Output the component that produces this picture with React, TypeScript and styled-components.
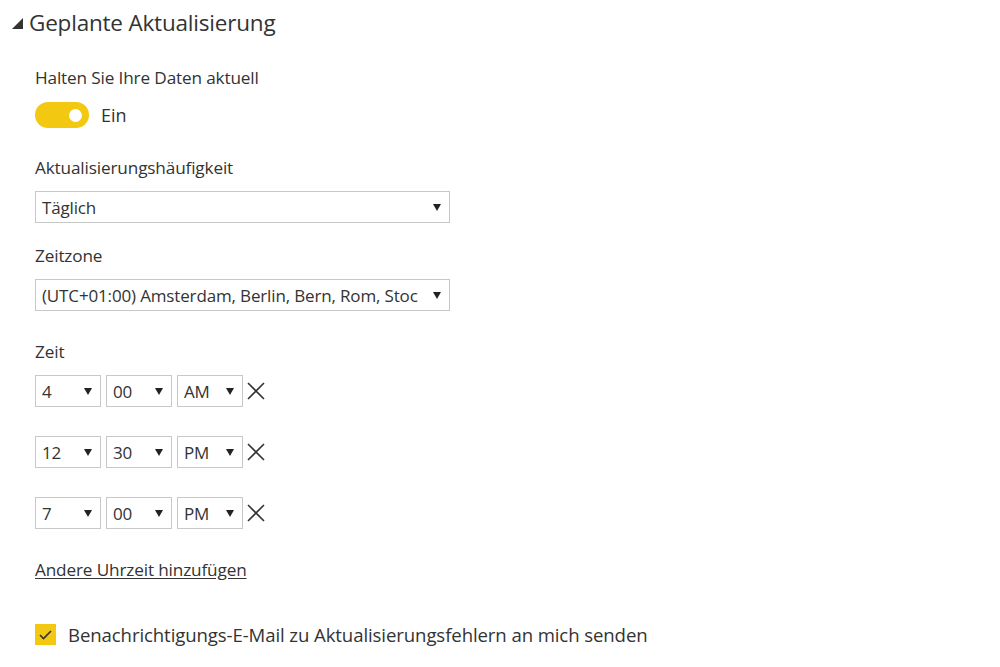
import React from "react";
import styled, { createGlobalStyle } from "styled-components";

const Global = createGlobalStyle`
  html, body { margin: 0; padding: 0; background: #ffffff; }
  body { font-family: "Open Sans", "Noto Sans", sans-serif; color: #333333; }
`;

const Page = styled.div`
  width: 1000px;
  height: 667px;
  overflow: hidden;
  box-sizing: border-box;
  padding-top: 6px;
`;

const Header = styled.div`
  display: flex;
  align-items: center;
  gap: 6px;
  padding-left: 12px;
  height: 32px;
`;

const Caret = styled.svg`
  width: 11px;
  height: 11px;
  margin-top: 2px;
`;

const Title = styled.h2`
  margin: 0;
  font-size: 22.5px;
  font-weight: 400;
  color: #333333;
  letter-spacing: -0.2px;
`;

const Body = styled.div`
  padding-left: 35px;
  display: flex;
  flex-direction: column;
`;

const Label = styled.div<{ $top: number }>`
  font-size: 17.2px;
  line-height: 22px;
  margin-top: ${(p) => p.$top}px;
  color: #333333;
  letter-spacing: -0.15px;
`;

const ToggleRow = styled.div`
  display: flex;
  align-items: center;
  gap: 12px;
  margin-top: 13px;
`;

const Toggle = styled.div`
  width: 54px;
  height: 26px;
  border-radius: 13px;
  background: #f2c811;
  display: flex;
  align-items: center;
  justify-content: flex-end;
  padding-right: 7px;
  box-sizing: border-box;
`;

const Knob = styled.div`
  width: 13px;
  height: 13px;
  border-radius: 50%;
  background: #ffffff;
`;

const ToggleText = styled.span`
  font-size: 18px;
  color: #333333;
`;

const Select = styled.div<{ $width: number; $top: number }>`
  width: ${(p) => p.$width}px;
  height: 32px;
  box-sizing: border-box;
  border: 1px solid #c8c8c8;
  display: flex;
  align-items: center;
  padding: 0 8px 0 6px;
  gap: 6px;
  margin-top: ${(p) => p.$top}px;
  background: #fff;
`;

const SelectText = styled.span`
  flex: 1;
  min-width: 0;
  white-space: nowrap;
  overflow: hidden;
  font-size: 17px;
  color: #333333;
  letter-spacing: -0.15px;
`;

const Arrow = styled.svg`
  width: 8px;
  height: 8px;
  flex: none;
`;

const TimeRow = styled.div<{ $top: number }>`
  display: flex;
  align-items: center;
  gap: 5px;
  margin-top: ${(p) => p.$top}px;
`;

const TimeSelect = styled(Select)`
  margin-top: 0;
`;

const Close = styled.svg`
  width: 20px;
  height: 20px;
  margin-left: -2px;
`;

const Link = styled.a`
  margin-top: 30px;
  font-size: 17.2px;
  line-height: 22px;
  color: #333333;
  text-decoration: underline;
  text-underline-offset: 2px;
  align-self: flex-start;
  letter-spacing: -0.15px;
`;

const CheckRow = styled.label`
  display: flex;
  align-items: center;
  gap: 12px;
  margin-top: 41px;
`;

const Box = styled.span`
  width: 21px;
  height: 21px;
  background: #f2c811;
  display: flex;
  align-items: center;
  justify-content: center;
`;

const CheckText = styled.span`
  font-size: 18.6px;
  color: #333333;
  letter-spacing: -0.1px;
`;

const ArrowIcon = () => (
  <Arrow viewBox="0 0 8 8">
    <polygon points="0,1 8,1 4,8" fill="#222" />
  </Arrow>
);

const Dropdown = ({ value, width, top }: { value: string; width: number; top: number }) => (
  <Select $width={width} $top={top}>
    <SelectText>{value}</SelectText>
    <ArrowIcon />
  </Select>
);

const times = [
  ["4", "00", "AM"],
  ["12", "30", "PM"],
  ["7", "00", "PM"],
];

export default function App() {
  return (
    <Page>
      <Global />
      <Header>
        <Caret viewBox="0 0 11 11">
          <polygon points="11,0 11,11 0,11" fill="#333" />
        </Caret>
        <Title>Geplante Aktualisierung</Title>
      </Header>
      <Body>
        <Label $top={29}>Halten Sie Ihre Daten aktuell</Label>
        <ToggleRow>
          <Toggle>
            <Knob />
          </Toggle>
          <ToggleText>Ein</ToggleText>
        </ToggleRow>
        <Label $top={29}>Aktualisierungshäufigkeit</Label>
        <Dropdown value="Täglich" width={415} top={12} />
        <Label $top={22}>Zeitzone</Label>
        <Dropdown
          value="(UTC+01:00) Amsterdam, Berlin, Bern, Rom, Stoc"
          width={415}
          top={12}
        />
        <Label $top={30}>Zeit</Label>
        {times.map((t, i) => (
          <TimeRow key={i} $top={i === 0 ? 12 : 29}>
            <TimeSelect $width={66} $top={0}>
              <SelectText>{t[0]}</SelectText>
              <ArrowIcon />
            </TimeSelect>
            <TimeSelect $width={66} $top={0}>
              <SelectText>{t[1]}</SelectText>
              <ArrowIcon />
            </TimeSelect>
            <TimeSelect $width={66} $top={0}>
              <SelectText>{t[2]}</SelectText>
              <ArrowIcon />
            </TimeSelect>
            <Close viewBox="0 0 20 20">
              <path d="M2 2 L18 18 M18 2 L2 18" stroke="#333" strokeWidth="1.6" fill="none" />
            </Close>
          </TimeRow>
        ))}
        <Link href="#">Andere Uhrzeit hinzufügen</Link>
        <CheckRow>
          <Box>
            <svg width="13" height="10" viewBox="0 0 13 10">
              <path d="M1 5 L4.5 8.5 L12 1" stroke="#333" strokeWidth="1.6" fill="none" />
            </svg>
          </Box>
          <CheckText>Benachrichtigungs-E-Mail zu Aktualisierungsfehlern an mich senden</CheckText>
        </CheckRow>
      </Body>
    </Page>
  );
}
